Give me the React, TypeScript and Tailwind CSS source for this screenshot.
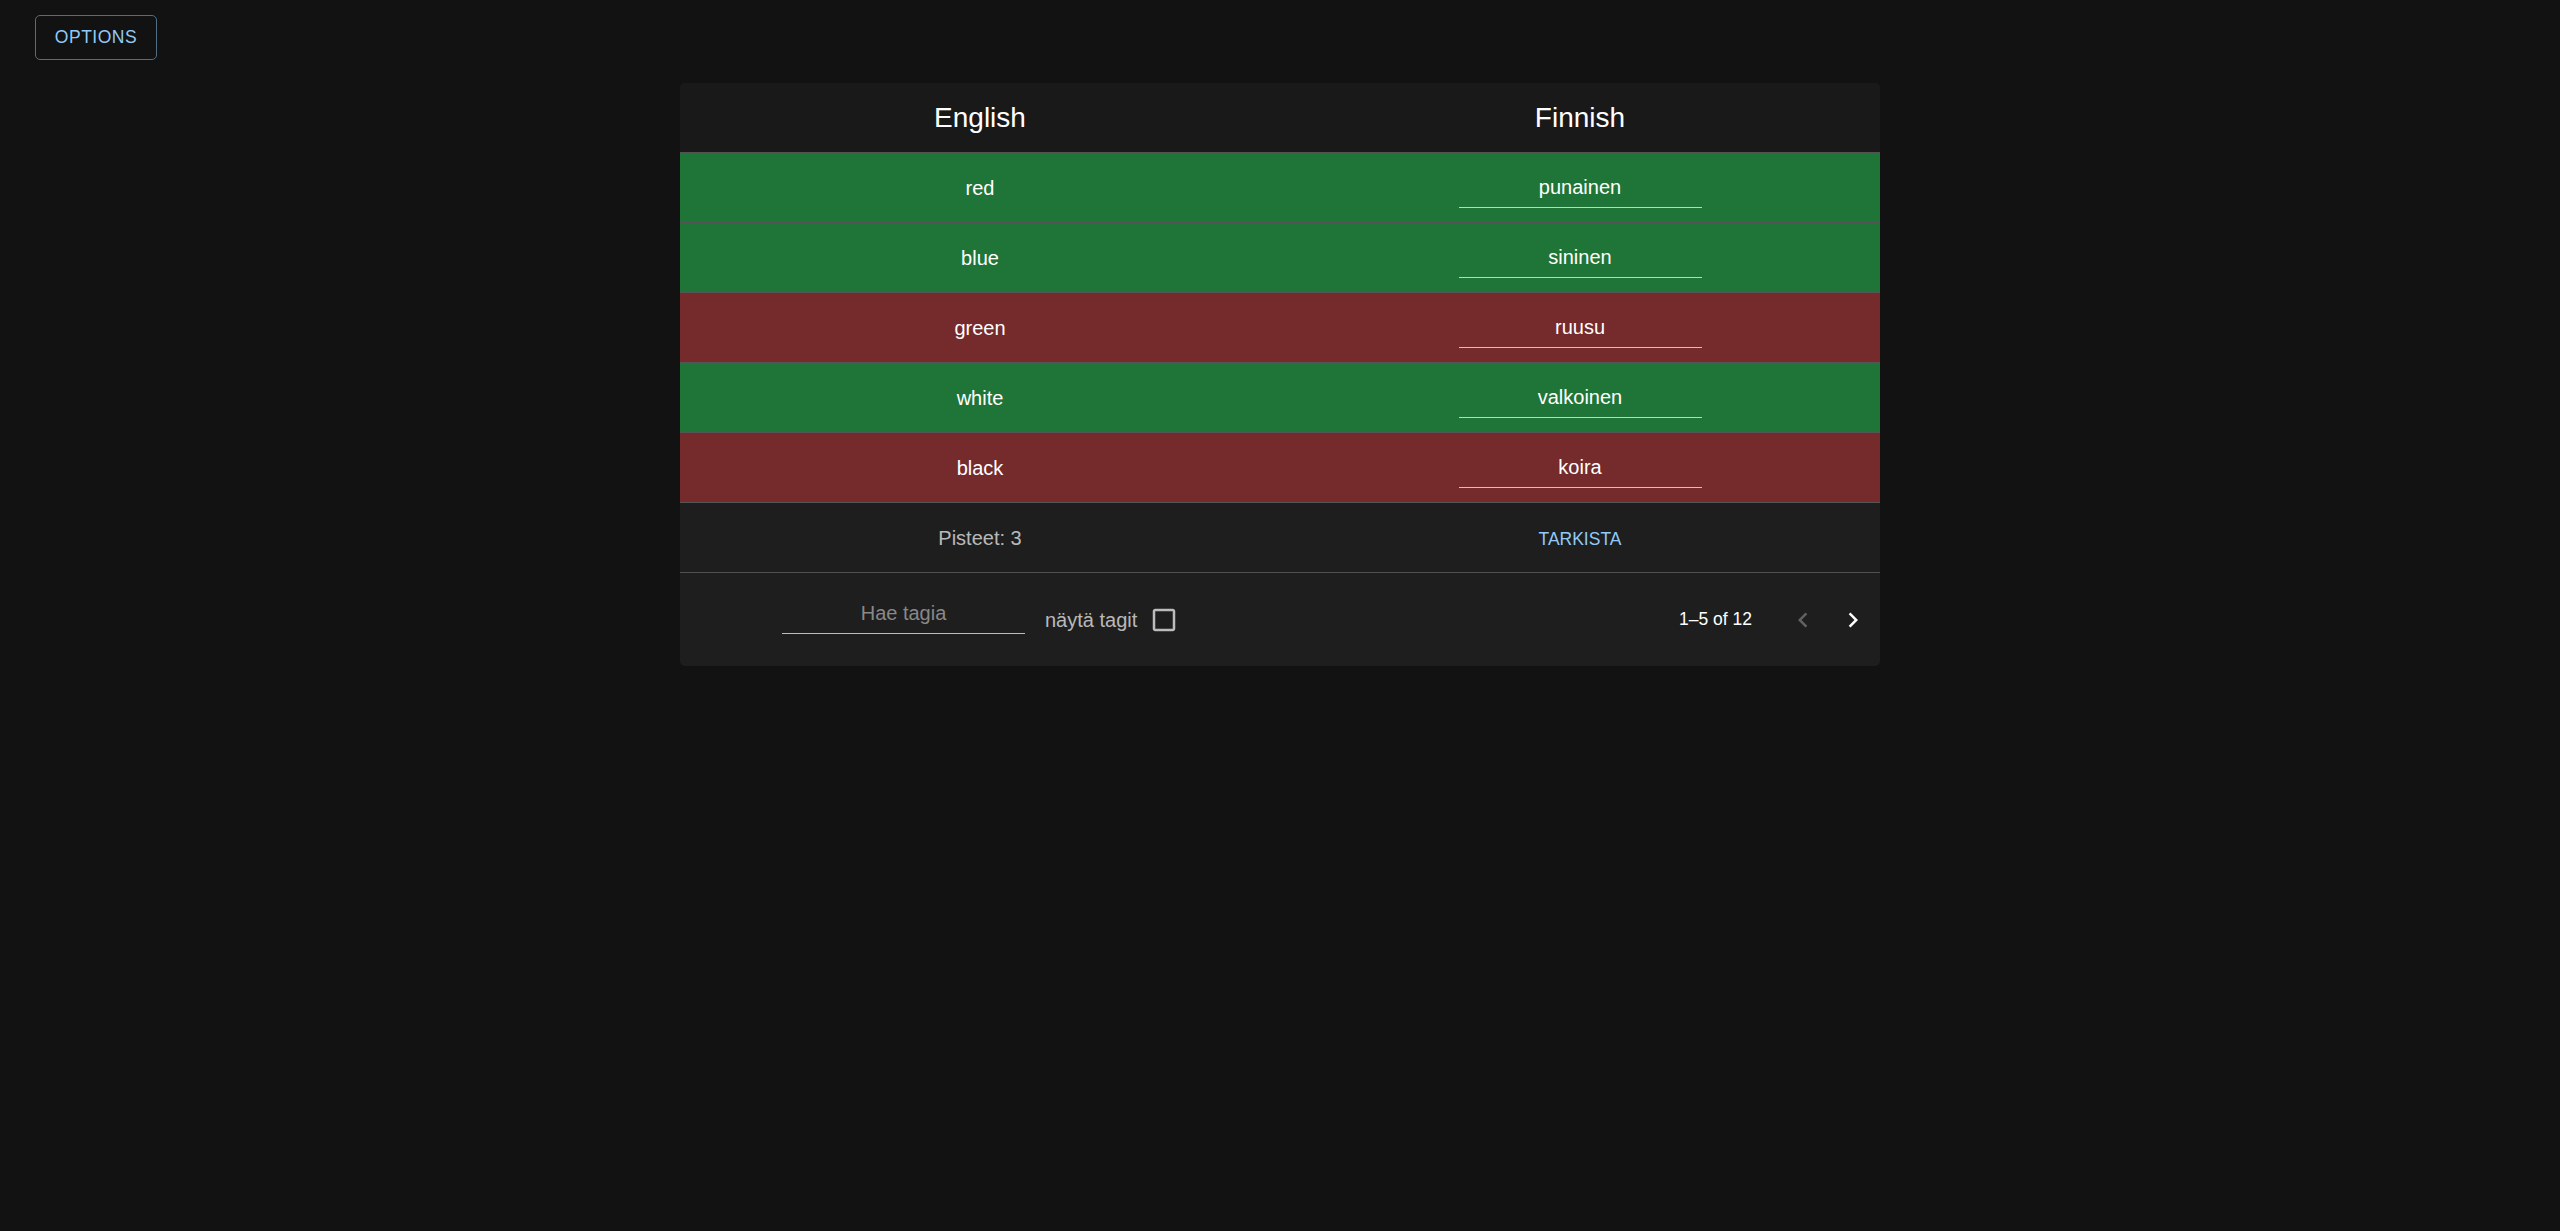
import React from "react";

const rows = [
  { en: "red", fi: "punainen", ok: true },
  { en: "blue", fi: "sininen", ok: true },
  { en: "green", fi: "ruusu", ok: false },
  { en: "white", fi: "valkoinen", ok: true },
  { en: "black", fi: "koira", ok: false },
];

function WordInput({ value, placeholder }: { value?: string; placeholder?: string }) {
  return (
    <div className="w-[243px] border-b border-white/70 pt-[6px] pb-[5px]">
      <input
        readOnly
        defaultValue={value}
        placeholder={placeholder}
        className="block w-full h-[29px] bg-transparent text-center text-[20px] leading-[29px] text-white outline-none placeholder:text-[#888888] placeholder:opacity-100"
        style={{ fontFamily: '"Liberation Sans", Arial, sans-serif' }}
      />
    </div>
  );
}

export default function App() {
  return (
    <div
      className="min-h-[1231px] w-full bg-[#121212] pt-[15px]"
      style={{ fontFamily: '"Liberation Sans", Arial, sans-serif' }}
    >
      <div className="pl-[35px]">
        <button className="h-[45px] w-[122px] rounded-[5px] border border-[#516e85] text-[17.5px] tracking-[0.5px] text-[#90caf9]">
          OPTIONS
        </button>
      </div>

      <div className="mx-auto mt-[23px] w-[1200px] overflow-hidden rounded-[5px] bg-[#1e1e1e]">
        <div className="grid h-[70px] grid-cols-2 items-center border-b border-[#515151] bg-[#191919] text-[28px] text-white">
          <div className="text-center">English</div>
          <div className="text-center">Finnish</div>
        </div>

        {rows.map((r) => (
          <div
            key={r.en}
            className={
              "grid h-[70px] grid-cols-2 items-center border-b border-[#555555] text-[20px] text-white " +
              (r.ok ? "bg-[#1f7537]" : "bg-[#752a2b]")
            }
          >
            <div className="text-center">{r.en}</div>
            <div className="flex justify-center">
              <WordInput value={r.fi} />
            </div>
          </div>
        ))}

        <div className="grid h-[70px] grid-cols-2 items-center border-b border-[#515151]">
          <div className="text-center text-[20px] text-white/70">Pisteet: 3</div>
          <div className="flex justify-center">
            <button className="mt-[3px] text-[17.5px] text-[#90caf9]">TARKISTA</button>
          </div>
        </div>

        <div className="flex h-[93px] items-center pl-[102px] pr-[2px]">
          <div className="mb-[12px]">
            <WordInput placeholder="Hae tagia" />
          </div>
          <span className="ml-[20px] text-[20px] text-white/70">näytä tagit</span>
          <svg viewBox="0 0 24 24" className="ml-[12px] h-[30px] w-[30px]" fill="rgba(255,255,255,0.7)">
            <path d="M19 5v14H5V5h14m0-2H5c-1.1 0-2 .9-2 2v14c0 1.1.9 2 2 2h14c1.1 0 2-.9 2-2V5c0-1.1-.9-2-2-2z" />
          </svg>

          <div className="ml-auto flex items-center">
            <span className="text-[17.5px] text-white">1–5 of 12</span>
            <div className="ml-[26px] flex">
              <button className="flex h-[50px] w-[50px] items-center justify-center">
                <svg viewBox="0 0 24 24" className="h-[30px] w-[30px]" fill="rgba(255,255,255,0.3)">
                  <path d="M15.41 16.59 10.83 12l4.58-4.59L14 6l-6 6 6 6 1.41-1.41z" />
                </svg>
              </button>
              <button className="flex h-[50px] w-[50px] items-center justify-center">
                <svg viewBox="0 0 24 24" className="h-[30px] w-[30px]" fill="#ffffff">
                  <path d="M8.59 16.59 13.17 12 8.59 7.41 10 6l6 6-6 6-1.41-1.41z" />
                </svg>
              </button>
            </div>
          </div>
        </div>
      </div>
    </div>
  );
}
